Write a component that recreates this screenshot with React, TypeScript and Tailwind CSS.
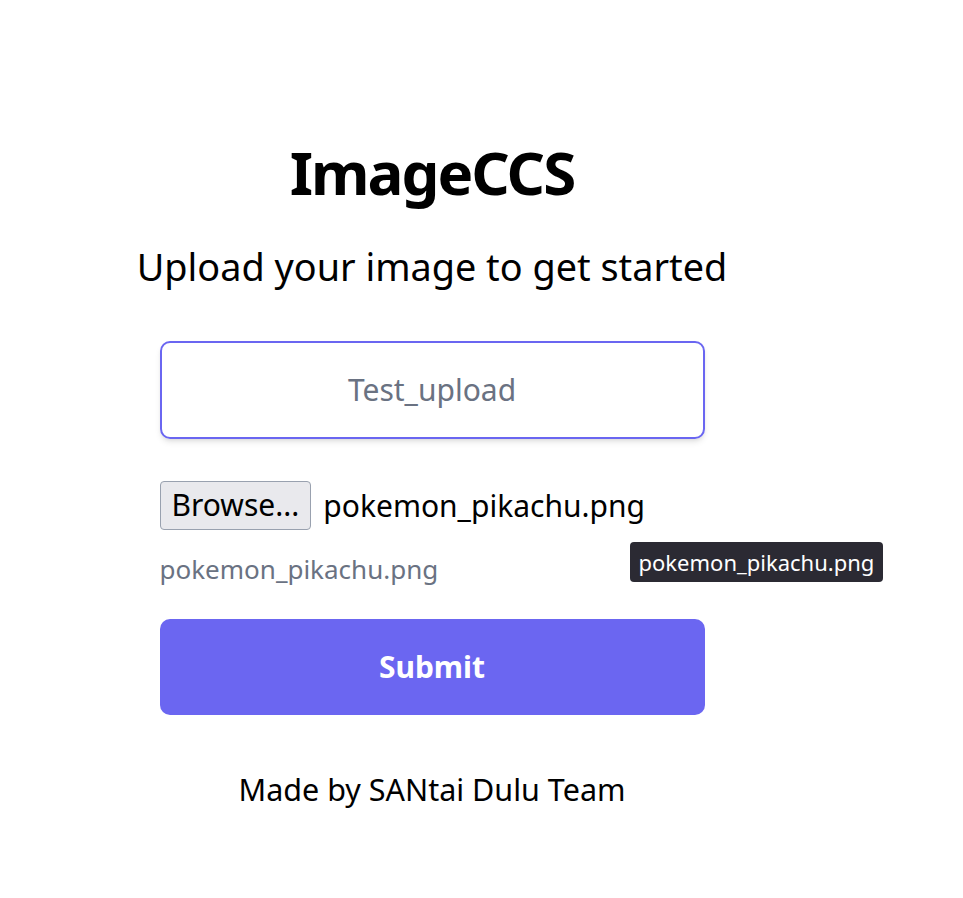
export default function App() {
  return (
    <div
      className="min-h-screen bg-white text-black"
      style={{ fontFamily: '"Noto Sans", "Open Sans", sans-serif' }}
    >
      <div className="flex w-[864px] flex-col items-center pt-[142px]">
        <h1 className="text-[60px] font-bold leading-none tracking-[-2px]">ImageCCS</h1>
        <p className="mt-[46px] text-[37.8px] leading-none">Upload your image to get started</p>

        <form className="relative mt-[55px] flex w-[545px] flex-col">
          <input
            type="text"
            placeholder="Test_upload"
            className="h-[98px] w-full rounded-[10px] border-2 border-[#6a66f1] text-center text-[30px] text-gray-800 shadow-md outline-none placeholder:text-gray-500"
          />

          <div className="mt-[42px] flex items-center">
            <button
              type="button"
              className="h-[49px] rounded-[4px] border border-gray-400 bg-[#e9e9ed] px-[11px] text-[30px] leading-none"
            >
              Browse...
            </button>
            <span className="ml-[12px] text-[30px]">pokemon_pikachu.png</span>
          </div>

          <p className="mt-[26px] text-[26px] leading-none text-gray-500">pokemon_pikachu.png</p>

          <span className="absolute left-[470px] top-[201px] whitespace-nowrap rounded-[4px] bg-[#2b2a33] px-[9px] py-[9px] text-[22px] leading-none text-white">
            pokemon_pikachu.png
          </span>

          <button
            type="button"
            className="mt-[37px] h-[96px] w-full rounded-[10px] bg-[#6b66f1] text-[30px] font-bold text-white"
          >
            Submit
          </button>
        </form>

        <p className="mt-[59px] text-[30.5px] leading-none">Made by SANtai Dulu Team</p>
      </div>
    </div>
  );
}
